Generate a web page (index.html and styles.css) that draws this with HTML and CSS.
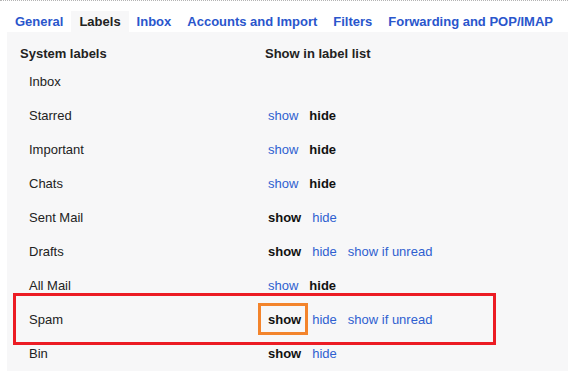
FILE: index.html
```html
<!DOCTYPE html>
<html lang="en">

<head>
    <meta charset="UTF-8">
    <meta name="viewport" content="width=device-width, initial-scale=1.0">
    <link rel="stylesheet" href="styles.css">
</head>

<body>
    <div class="tabs">
        <a class="tab">General</a>
        <a class="tab active">Labels</a>
        <a class="tab">Inbox</a>
        <a class="tab">Accounts and Import</a>
        <a class="tab">Filters</a>
        <a class="tab">Forwarding and POP/IMAP</a>
    </div>

    <div class="panel">
        <div class="label-row header">
            <div class="name">System labels</div>
            <div class="actions">Show in label list</div>
        </div>

        <div class="label-row">
            <div class="name">Inbox</div>
            <div class="actions"></div>
        </div>
        <div class="label-row">
            <div class="name">Starred</div>
            <div class="actions"><a>show</a><b>hide</b></div>
        </div>
        <div class="label-row">
            <div class="name">Important</div>
            <div class="actions"><a>show</a><b>hide</b></div>
        </div>
        <div class="label-row">
            <div class="name">Chats</div>
            <div class="actions"><a>show</a><b>hide</b></div>
        </div>
        <div class="label-row">
            <div class="name">Sent Mail</div>
            <div class="actions"><b>show</b><a>hide</a></div>
        </div>
        <div class="label-row">
            <div class="name">Drafts</div>
            <div class="actions"><b>show</b><a>hide</a><a>show if unread</a></div>
        </div>
        <div class="label-row">
            <div class="name">All Mail</div>
            <div class="actions"><a>show</a><b>hide</b></div>
        </div>
        <div class="label-row">
            <div class="name">Spam</div>
            <div class="actions"><b class="picked">show</b><a>hide</a><a>show if unread</a></div>
        </div>
        <div class="label-row">
            <div class="name">Bin</div>
            <div class="actions"><b>show</b><a>hide</a></div>
        </div>

        <!-- annotation around the spam row -->
        <div class="highlight"></div>
    </div>
</body>

</html>
```

FILE: styles.css
```css
body {
    margin: 0;
    font-family: "Liberation Sans", Arial, sans-serif;
    font-size: 13px;
    color: #222;
    background: #fff;
    border-top: 1px dotted #b4b4b4;
}

.tabs {
    display: flex;
    padding-top: 10px;
    padding-left: 7px;
}

.tab {
    padding: 0 8px;
    line-height: 21px;
    font-weight: bold;
    color: #2a56cc;
}

.tab.active {
    color: #222;
    background: #f7f7f8;
}

.panel {
    position: relative;
    margin-left: 7px;
    padding-left: 13px;
    background: #f7f7f8;
    height: 339px;
}

.label-row {
    display: flex;
    align-items: center;
    height: 34px;
}

.label-row .name {
    width: 236px;
    padding-left: 9px;
}

.label-row .actions {
    display: flex;
    gap: 11px;
    padding-left: 3px;
}

.label-row.header {
    height: 18px;
    padding-top: 12px;
    padding-bottom: 2px;
    font-weight: bold;
}

.label-row.header .name {
    padding-left: 0;
    width: 245px;
}

.label-row.header .actions {
    padding-left: 0;
}

.actions a {
    color: #2f5fd0;
}

.actions b {
    color: #111;
}

/*orange box round the selected show*/
.picked {
    position: relative;
}

.picked::after {
    content: "";
    position: absolute;
    left: -10px;
    top: -9px;
    width: 44px;
    height: 26px;
    border: 3px solid #f3842c;
}

.highlight {
    position: absolute;
    left: 6px;
    top: 261px;
    width: 477px;
    height: 46px;
    border: 3px solid #ec1c24;
}
```
